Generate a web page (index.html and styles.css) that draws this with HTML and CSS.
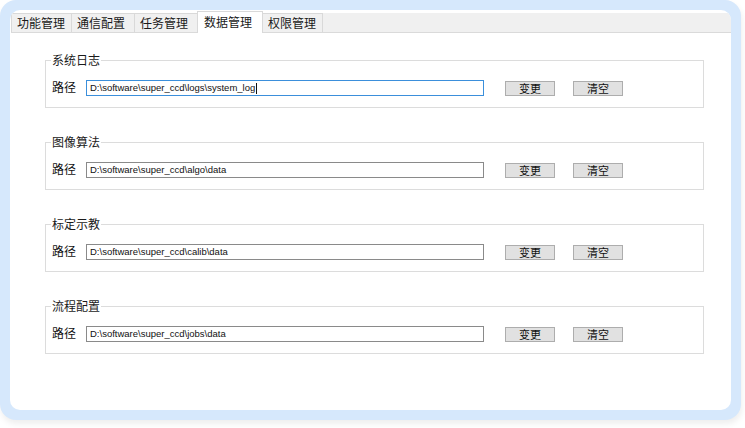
FILE: index.html
```html
<!DOCTYPE html>
<html lang="zh">
<head>
<meta charset="utf-8">
<link rel="stylesheet" href="styles.css">
</head>
<body>
<div class="frame">
  <div class="panel">
    <div class="tabbar">
      <div class="tab">功能管理</div>
      <div class="tab">通信配置</div>
      <div class="tab">任务管理</div>
      <div class="tab active">数据管理</div>
      <div class="tab">权限管理</div>
    </div>
    <div class="content">
      <fieldset class="group">
        <legend>系统日志</legend>
        <div class="row">
          <span class="label">路径</span>
          <div class="input focus">D:\software\super_ccd\logs\system_log<span class="caret"></span></div>
          <button class="btn">变更</button>
          <button class="btn">清空</button>
        </div>
      </fieldset>
      <fieldset class="group">
        <legend>图像算法</legend>
        <div class="row">
          <span class="label">路径</span>
          <div class="input">D:\software\super_ccd\algo\data</div>
          <button class="btn">变更</button>
          <button class="btn">清空</button>
        </div>
      </fieldset>
      <fieldset class="group">
        <legend>标定示教</legend>
        <div class="row">
          <span class="label">路径</span>
          <div class="input">D:\software\super_ccd\calib\data</div>
          <button class="btn">变更</button>
          <button class="btn">清空</button>
        </div>
      </fieldset>
      <fieldset class="group">
        <legend>流程配置</legend>
        <div class="row">
          <span class="label">路径</span>
          <div class="input">D:\software\super_ccd\jobs\data</div>
          <button class="btn">变更</button>
          <button class="btn">清空</button>
        </div>
      </fieldset>
    </div>
  </div>
</div>
</body>
</html>
```
FILE: styles.css
```css
html, body {
  margin: 0;
  padding: 0;
  background: #ffffff;
}
body {
  width: 745px;
  height: 428px;
  overflow: hidden;
  font-family: "Noto Sans CJK SC", "Noto Sans", sans-serif;
  color: #1a1a1a;
}
.frame {
  box-sizing: border-box;
  width: 741px;
  height: 420px;
  padding: 10px;
  background: #d6e8fc;
  border-radius: 16px;
  box-shadow: 1px 4px 6px rgba(0, 0, 0, 0.07);
}
.panel {
  height: 400px;
  background: #ffffff;
  border-radius: 10px;
  overflow: hidden;
  padding-top: 3px;
  box-sizing: border-box;
}
.tabbar {
  display: flex;
  align-items: flex-end;
  height: 19px;
  margin-left: 1px;
  background: #f0f0f0;
  border-bottom: 1px solid #dadada;
  border-top-left-radius: 4px;
}
.tab {
  box-sizing: border-box;
  height: 19px;
  padding: 0 5px;
  font-size: 12px;
  line-height: 18px;
  color: #1a1a1a;
  background: #f0f0f0;
  border: 1px solid #d9d9d9;
  border-bottom: none;
  margin-right: -1px;
}
.tab:first-child {
  width: 61px;
}
.tab:nth-child(2), .tab:nth-child(3) {
  width: 64px;
}
.tab.active {
  width: 66px;
  height: 22px;
  line-height: 20px;
  background: #ffffff;
  margin-bottom: -1px;
  padding-left: 6px;
  position: relative;
  z-index: 1;
}
.tab:last-child {
  width: 61px;
}
.content {
  padding: 0 0 0 35px;
  display: flex;
  flex-direction: column;
  gap: 27px;
  margin-top: 20px;
}
.group {
  box-sizing: border-box;
  width: 659px;
  margin: 0;
  padding: 13px 0 11px 6px;
  border: 1px solid #dcdcdc;
}
.group legend {
  padding: 0 1px;
  margin-left: -1px;
  font-size: 12px;
  line-height: 14px;
  color: #1a1a1a;
}
.row {
  display: flex;
  align-items: center;
  height: 16px;
}
.label {
  width: 34px;
  font-size: 12px;
  line-height: 16px;
  color: #111;
  margin-top: -3px;
}
.input {
  box-sizing: border-box;
  width: 398px;
  height: 16px;
  border: 1px solid #8a8a8a;
  padding: 0 3px;
  font-family: "Liberation Sans", "Noto Sans", sans-serif;
  font-size: 9.5px;
  line-height: 14px;
  color: #111;
  white-space: nowrap;
  display: flex;
  align-items: center;
}
.input.focus {
  border-color: #3b8fdb;
}
.caret {
  display: inline-block;
  width: 1px;
  height: 11px;
  background: #111;
  margin-left: 1px;
}
.btn {
  box-sizing: border-box;
  width: 50px;
  height: 15px;
  margin: 0 0 0 21px;
  padding: 0;
  border: 1px solid #adadad;
  background: #e1e1e1;
  font-family: "Noto Sans CJK SC", sans-serif;
  font-size: 11px;
  line-height: 13px;
  color: #111;
}
.btn + .btn {
  margin-left: 18px;
}
```
